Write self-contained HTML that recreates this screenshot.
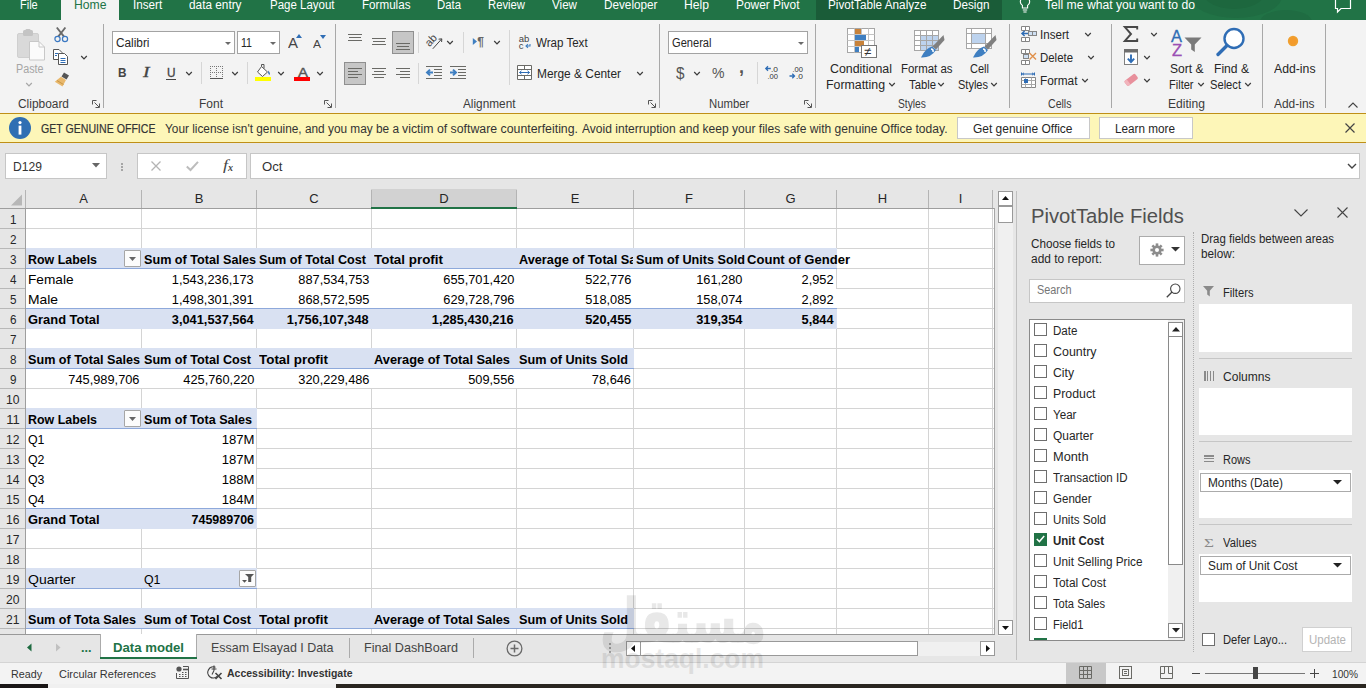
<!DOCTYPE html>
<html lang="en"><head><meta charset="utf-8"><title>Excel</title>
<style>

html,body{margin:0;padding:0;}
body{width:1366px;height:688px;overflow:hidden;background:#e6e6e6;font-family:"Liberation Sans",sans-serif;color:#262626;}
#root{position:relative;width:1366px;height:688px;overflow:hidden;background:#e6e6e6;}
.a{position:absolute;box-sizing:border-box;display:block;}
.t{position:absolute;white-space:nowrap;display:block;}
svg{overflow:visible;}

</style></head>
<body>
<div id="root">
<div class="a" style="left:0px;top:0px;width:1366px;height:20px;background:#217346;"></div>
<div class="a" style="left:816px;top:0px;width:186px;height:20px;background:#1a5c38;"></div>
<svg class="a" style="left:1186px;top:0px;overflow:hidden;" width="128" height="20" viewBox="0 0 128 20"><ellipse cx="50" cy="-4" rx="46" ry="22" fill="#1f6c42"/><ellipse cx="48" cy="-6" rx="30" ry="15" fill="#1d673e"/><ellipse cx="100" cy="22" rx="26" ry="12" fill="#1f6c42"/></svg>
<div class="a" style="left:61px;top:0px;width:58px;height:20px;background:#f3f3f3;"></div>
<span class="t" style="top:-2px;font-size:12px;line-height:14px;height:14px;left:20px;transform-origin:0 50%;color:#fff;transform:scaleX(0.9150);">File</span>
<span class="t" style="top:-2px;font-size:12px;line-height:14px;height:14px;left:132.8px;transform-origin:0 50%;color:#fff;transform:scaleX(0.9728);">Insert</span>
<span class="t" style="top:-2px;font-size:12px;line-height:14px;height:14px;left:189px;transform-origin:0 50%;color:#fff;transform:scaleX(0.9836);">data entry</span>
<span class="t" style="top:-2px;font-size:12px;line-height:14px;height:14px;left:269.5px;transform-origin:0 50%;color:#fff;transform:scaleX(0.9571);">Page Layout</span>
<span class="t" style="top:-2px;font-size:12px;line-height:14px;height:14px;left:361.5px;transform-origin:0 50%;color:#fff;transform:scaleX(0.9697);">Formulas</span>
<span class="t" style="top:-2px;font-size:12px;line-height:14px;height:14px;left:437px;transform-origin:0 50%;color:#fff;transform:scaleX(0.9464);">Data</span>
<span class="t" style="top:-2px;font-size:12px;line-height:14px;height:14px;left:488px;transform-origin:0 50%;color:#fff;transform:scaleX(0.9401);">Review</span>
<span class="t" style="top:-2px;font-size:12px;line-height:14px;height:14px;left:552px;transform-origin:0 50%;color:#fff;transform:scaleX(0.9691);">View</span>
<span class="t" style="top:-2px;font-size:12px;line-height:14px;height:14px;left:604px;transform-origin:0 50%;color:#fff;transform:scaleX(0.9780);">Developer</span>
<span class="t" style="top:-2px;font-size:12px;line-height:14px;height:14px;left:684px;transform-origin:0 50%;color:#fff;transform:scaleX(1.0127);">Help</span>
<span class="t" style="top:-2px;font-size:12px;line-height:14px;height:14px;left:736px;transform-origin:0 50%;color:#fff;transform:scaleX(0.9917);">Power Pivot</span>
<span class="t" style="top:-2px;font-size:12px;line-height:14px;height:14px;left:828px;transform-origin:0 50%;color:#fff;transform:scaleX(0.9778);">PivotTable Analyze</span>
<span class="t" style="top:-2px;font-size:12px;line-height:14px;height:14px;left:953px;transform-origin:0 50%;color:#fff;transform:scaleX(0.9770);">Design</span>
<span class="t" style="top:-2px;font-size:12px;line-height:14px;height:14px;left:1045px;transform-origin:0 50%;color:#fff;transform:scaleX(1.0130);">Tell me what you want to do</span>
<span class="t" style="top:-2px;font-size:12px;line-height:14px;height:14px;left:73.5px;transform-origin:0 50%;color:#217346;transform:scaleX(1.0151);">Home</span>
<svg class="a" style="left:1018px;top:0px;" width="14" height="14" viewBox="0 0 14 14"><path d="M7 -3 a4.6 4.6 0 0 1 2.6 8.4 V8 H4.4 V5.4 A4.6 4.6 0 0 1 7 -3 Z M4.8 10 H9.2 M5.4 12 H8.6" fill="none" stroke="#fff" stroke-width="1.1"/></svg>
<svg class="a" style="left:1334px;top:0px;" width="18" height="14" viewBox="0 0 18 14"><path d="M1.5 -3 H16.5 V8.5 H7 L3.5 12 V8.5 H1.5 Z" fill="none" stroke="#fff" stroke-width="1.2"/></svg>
<div class="a" style="left:0px;top:20px;width:1366px;height:93px;background:#f3f3f3;"></div>
<div class="a" style="left:61px;top:19px;width:58px;height:2px;background:#f3f3f3;"></div>
<div class="a" style="left:103px;top:24px;width:1px;height:84px;background:#a8a8a8;"></div>
<div class="a" style="left:335px;top:24px;width:1px;height:84px;background:#a8a8a8;"></div>
<div class="a" style="left:659px;top:24px;width:1px;height:84px;background:#a8a8a8;"></div>
<div class="a" style="left:815px;top:24px;width:1px;height:84px;background:#a8a8a8;"></div>
<div class="a" style="left:1009px;top:24px;width:1px;height:84px;background:#a8a8a8;"></div>
<div class="a" style="left:1111px;top:24px;width:1px;height:84px;background:#a8a8a8;"></div>
<div class="a" style="left:1262px;top:24px;width:1px;height:84px;background:#a8a8a8;"></div>
<div class="a" style="left:1325px;top:24px;width:1px;height:84px;background:#a8a8a8;"></div>
<div class="a" style="left:418px;top:32px;width:1px;height:21px;background:#d6d6d6;"></div>
<div class="a" style="left:463px;top:32px;width:1px;height:21px;background:#d6d6d6;"></div>
<div class="a" style="left:509px;top:30px;width:1px;height:55px;background:#d6d6d6;"></div>
<div class="a" style="left:418px;top:63px;width:1px;height:21px;background:#d6d6d6;"></div>
<div class="a" style="left:757px;top:62px;width:1px;height:22px;background:#d6d6d6;"></div>
<div class="a" style="left:201px;top:62px;width:1px;height:22px;background:#d6d6d6;"></div>
<div class="a" style="left:247px;top:62px;width:1px;height:22px;background:#d6d6d6;"></div>
<span class="t" style="top:97px;font-size:12px;line-height:14px;height:14px;left:18px;transform-origin:0 50%;color:#3b3b3b;transform:scaleX(0.9927);">Clipboard</span>
<span class="t" style="top:97px;font-size:12px;line-height:14px;height:14px;left:199px;transform-origin:0 50%;color:#3b3b3b;transform:scaleX(0.9993);">Font</span>
<span class="t" style="top:97px;font-size:12px;line-height:14px;height:14px;left:463px;transform-origin:0 50%;color:#3b3b3b;transform:scaleX(0.9836);">Alignment</span>
<span class="t" style="top:97px;font-size:12px;line-height:14px;height:14px;left:709.3px;transform-origin:0 50%;color:#3b3b3b;transform:scaleX(0.9441);">Number</span>
<span class="t" style="top:97px;font-size:12px;line-height:14px;height:14px;left:898.4px;transform-origin:0 50%;color:#3b3b3b;transform:scaleX(0.8535);">Styles</span>
<span class="t" style="top:97px;font-size:12px;line-height:14px;height:14px;left:1048px;transform-origin:0 50%;color:#3b3b3b;transform:scaleX(0.8811);">Cells</span>
<span class="t" style="top:97px;font-size:12px;line-height:14px;height:14px;left:1167.5px;transform-origin:0 50%;color:#3b3b3b;transform:scaleX(1.0081);">Editing</span>
<span class="t" style="top:97px;font-size:12px;line-height:14px;height:14px;left:1273.5px;transform-origin:0 50%;color:#3b3b3b;transform:scaleX(0.9954);">Add-ins</span>
<svg class="a" style="left:92px;top:100px;" width="8" height="8" viewBox="0 0 8 8"><path d="M0.5 4.5 V0.5 H4.5" fill="none" stroke="#555" stroke-width="1"/><path d="M2.5 2.5 L7 7 M7.5 3.5 V7.5 H3.5" fill="none" stroke="#555" stroke-width="1"/></svg>
<svg class="a" style="left:324px;top:100px;" width="8" height="8" viewBox="0 0 8 8"><path d="M0.5 4.5 V0.5 H4.5" fill="none" stroke="#555" stroke-width="1"/><path d="M2.5 2.5 L7 7 M7.5 3.5 V7.5 H3.5" fill="none" stroke="#555" stroke-width="1"/></svg>
<svg class="a" style="left:648px;top:100px;" width="8" height="8" viewBox="0 0 8 8"><path d="M0.5 4.5 V0.5 H4.5" fill="none" stroke="#555" stroke-width="1"/><path d="M2.5 2.5 L7 7 M7.5 3.5 V7.5 H3.5" fill="none" stroke="#555" stroke-width="1"/></svg>
<svg class="a" style="left:804px;top:100px;" width="8" height="8" viewBox="0 0 8 8"><path d="M0.5 4.5 V0.5 H4.5" fill="none" stroke="#555" stroke-width="1"/><path d="M2.5 2.5 L7 7 M7.5 3.5 V7.5 H3.5" fill="none" stroke="#555" stroke-width="1"/></svg>
<svg class="a" style="left:1348px;top:102px;" width="10" height="6" viewBox="0 0 10 6"><path d="M0.5 5.5 L5 1 L9.5 5.5" fill="none" stroke="#444" stroke-width="1.1"/></svg>
<span class="t" style="top:62px;font-size:12px;line-height:14px;height:14px;left:15.5px;transform-origin:0 50%;color:#a6a6a6;transform:scaleX(0.8961);">Paste</span>
<svg class="a" style="left:24.5px;top:81.5px;" width="8" height="6" viewBox="0 0 8 6"><path d="M1.2 1 L4 3.8 L6.8 1" fill="none" stroke="#a6a6a6" stroke-width="1.2"/></svg>
<svg class="a" style="left:17px;top:28.5px;" width="29" height="32" viewBox="0 0 29 32"><rect x="0.5" y="4.5" width="21" height="24" rx="1.5" fill="#d9d9d9" stroke="#cfcfcf"/><rect x="6" y="1" width="10" height="6" rx="1.5" fill="#c4c4c4"/><rect x="8.5" y="0" width="5" height="3" rx="1" fill="#c4c4c4"/><path d="M12.5 12.5 H22 L27.5 18 V31 H12.5 Z" fill="#fbfbfb" stroke="#c8c8c8"/><path d="M22 12.5 V18 H27.5" fill="none" stroke="#c8c8c8"/></svg>
<svg class="a" style="left:54px;top:25.6px;" width="15" height="17" viewBox="0 0 15 17"><path d="M2.8 1.5 L10 10.6 M11.4 1.5 L4.2 10.6" stroke="#6a6a6a" stroke-width="1.9" fill="none"/><circle cx="3.5" cy="13" r="2.6" fill="#f3f3f3" stroke="#3a78c2" stroke-width="1.2"/><circle cx="11" cy="13" r="2.6" fill="#f3f3f3" stroke="#3a78c2" stroke-width="1.2"/></svg>
<svg class="a" style="left:53px;top:49px;" width="16" height="16" viewBox="0 0 16 16"><path d="M0.5 0.5 H6 L9 3.5 V10.5 H0.5 Z" fill="#fff" stroke="#555"/><path d="M5.5 4.5 H11.5 L14.5 7.5 V15.5 H5.5 Z" fill="#fff" stroke="#555"/><path d="M2 4.5h3M2 6.5h2M7.5 9.5h5M7.5 11.5h5M7.5 13.5h5" stroke="#2f6db5" stroke-width="1"/></svg>
<svg class="a" style="left:79.5px;top:54.5px;" width="8" height="6" viewBox="0 0 8 6"><path d="M1.2 1 L4 3.8 L6.8 1" fill="none" stroke="#3a3a3a" stroke-width="1.2"/></svg>
<svg class="a" style="left:54px;top:72px;" width="16" height="15" viewBox="0 0 16 15"><path d="M10 0.5 L15 3.5 L12.5 7.5 L7.5 4.5 Z" fill="#555"/><path d="M7 4.8 L12 8 L8.5 14.5 L0.8 9.8 Z" fill="#e9b86c"/><path d="M3 8.5 L9.5 12.5" stroke="#c79646" stroke-width="1"/></svg>
<div class="a" style="left:112px;top:31px;width:123px;height:23px;background:#fff;border:1px solid #a3a3a3;"></div>
<span class="t" style="top:36px;font-size:12px;line-height:14px;height:14px;left:115.5px;transform-origin:0 50%;color:#262626;transform:scaleX(0.9848);">Calibri</span>
<svg class="a" style="left:224.5px;top:41.5px;" width="6" height="3" viewBox="0 0 6 3"><path d="M0 0 H6 L3 3 Z" fill="#6a6a6a"/></svg>
<div class="a" style="left:237px;top:31px;width:43px;height:23px;background:#fff;border:1px solid #a3a3a3;"></div>
<span class="t" style="top:36px;font-size:12px;line-height:14px;height:14px;left:240.5px;transform-origin:0 50%;color:#262626;transform:scaleX(0.8822);">11</span>
<svg class="a" style="left:269.5px;top:41.5px;" width="6" height="3" viewBox="0 0 6 3"><path d="M0 0 H6 L3 3 Z" fill="#6a6a6a"/></svg>
<span class="t" style="top:35px;font-size:14px;line-height:16px;height:16px;left:288px;transform-origin:0 50%;color:#444;transform:scaleX(1.0702);">A</span>
<svg class="a" style="left:296px;top:34px;" width="6" height="4" viewBox="0 0 6 4"><path d="M0 4 L3 0 L6 4 Z" fill="#2f6db5"/></svg>
<span class="t" style="top:38px;font-size:11.5px;line-height:12px;height:12px;left:313px;transform-origin:0 50%;color:#444;transform:scaleX(1.0428);">A</span>
<svg class="a" style="left:320px;top:35px;" width="6" height="4" viewBox="0 0 6 4"><path d="M0 0 H6 L3 4 Z" fill="#2f6db5"/></svg>
<span class="t" style="top:65px;font-size:13.5px;line-height:15px;height:15px;left:118px;transform-origin:0 50%;color:#444;font-weight:bold;transform:scaleX(0.8718);">B</span>
<span class="t" style="top:65px;font-size:14px;line-height:16px;height:16px;left:143px;transform-origin:0 50%;color:#444;font-style:italic;font-family:'Liberation Serif',serif;-webkit-text-stroke:0.3px #444;transform:scaleX(1.3913);">I</span>
<span class="t" style="top:66px;font-size:12px;line-height:14px;height:14px;left:166.5px;transform-origin:0 50%;color:#444;-webkit-text-stroke:0.3px #444;transform:scaleX(0.9802);">U</span>
<div class="a" style="left:166px;top:79px;width:10px;height:1px;background:#444;"></div>
<svg class="a" style="left:184.5px;top:70.5px;" width="8" height="6" viewBox="0 0 8 6"><path d="M1.2 1 L4 3.8 L6.8 1" fill="none" stroke="#3a3a3a" stroke-width="1.2"/></svg>
<svg class="a" style="left:210px;top:66px;shape-rendering:crispEdges;" width="13" height="13" viewBox="0 0 13 13"><rect x="0" y="0" width="1" height="1" fill="#777"/><rect x="2" y="0" width="1" height="1" fill="#777"/><rect x="4" y="0" width="1" height="1" fill="#777"/><rect x="6" y="0" width="1" height="1" fill="#777"/><rect x="8" y="0" width="1" height="1" fill="#777"/><rect x="10" y="0" width="1" height="1" fill="#777"/><rect x="12" y="0" width="1" height="1" fill="#777"/><rect x="0" y="6" width="1" height="1" fill="#777"/><rect x="2" y="6" width="1" height="1" fill="#777"/><rect x="4" y="6" width="1" height="1" fill="#777"/><rect x="6" y="6" width="1" height="1" fill="#777"/><rect x="8" y="6" width="1" height="1" fill="#777"/><rect x="10" y="6" width="1" height="1" fill="#777"/><rect x="12" y="6" width="1" height="1" fill="#777"/><rect x="0" y="2" width="1" height="1" fill="#777"/><rect x="0" y="4" width="1" height="1" fill="#777"/><rect x="0" y="6" width="1" height="1" fill="#777"/><rect x="0" y="8" width="1" height="1" fill="#777"/><rect x="0" y="10" width="1" height="1" fill="#777"/><rect x="6" y="2" width="1" height="1" fill="#777"/><rect x="6" y="4" width="1" height="1" fill="#777"/><rect x="6" y="6" width="1" height="1" fill="#777"/><rect x="6" y="8" width="1" height="1" fill="#777"/><rect x="6" y="10" width="1" height="1" fill="#777"/><rect x="12" y="2" width="1" height="1" fill="#777"/><rect x="12" y="4" width="1" height="1" fill="#777"/><rect x="12" y="6" width="1" height="1" fill="#777"/><rect x="12" y="8" width="1" height="1" fill="#777"/><rect x="12" y="10" width="1" height="1" fill="#777"/><rect x="0" y="12" width="13" height="1" fill="#555"/></svg>
<svg class="a" style="left:230.5px;top:70.5px;" width="8" height="6" viewBox="0 0 8 6"><path d="M1.2 1 L4 3.8 L6.8 1" fill="none" stroke="#3a3a3a" stroke-width="1.2"/></svg>
<svg class="a" style="left:256px;top:64px;" width="16" height="17" viewBox="0 0 16 17"><path d="M5.5 2.5 L11.5 8 L6.5 12.5 L1.5 8 Z" fill="#fff" stroke="#555" stroke-width="1"/><path d="M5.5 2.5 V0.5 H8 V4.5" fill="none" stroke="#555"/><path d="M12.2 6.5 Q15 9.5 13.2 11 Q11.5 10 12.2 6.5Z" fill="#2f6db5"/><rect x="-1" y="13" width="16" height="4" fill="#ffff00"/></svg>
<svg class="a" style="left:276.5px;top:70.5px;" width="8" height="6" viewBox="0 0 8 6"><path d="M1.2 1 L4 3.8 L6.8 1" fill="none" stroke="#3a3a3a" stroke-width="1.2"/></svg>
<span class="t" style="top:65px;font-size:13.5px;line-height:15px;height:15px;left:297.5px;transform-origin:0 50%;color:#555;-webkit-text-stroke:0.4px #555;transform:scaleX(1.1092);">A</span>
<div class="a" style="left:294px;top:77px;width:16px;height:4px;background:#ff0000;"></div>
<svg class="a" style="left:315.5px;top:70.5px;" width="8" height="6" viewBox="0 0 8 6"><path d="M1.2 1 L4 3.8 L6.8 1" fill="none" stroke="#3a3a3a" stroke-width="1.2"/></svg>
<div class="a" style="left:392px;top:31px;width:22px;height:23px;background:#c6c6c6;border:1px solid #8f8f8f;"></div>
<div class="a" style="left:344px;top:62px;width:22px;height:23px;background:#c6c6c6;border:1px solid #8f8f8f;"></div>
<div class="a" style="left:348.0px;top:34px;width:14px;height:1px;background:#6a6a66;"></div>
<div class="a" style="left:349.0px;top:37px;width:12px;height:1px;background:#6a6a66;"></div>
<div class="a" style="left:348.0px;top:40px;width:14px;height:1px;background:#6a6a66;"></div>
<div class="a" style="left:372.0px;top:38px;width:14px;height:1px;background:#6a6a66;"></div>
<div class="a" style="left:373.0px;top:41px;width:12px;height:1px;background:#6a6a66;"></div>
<div class="a" style="left:372.0px;top:44px;width:14px;height:1px;background:#6a6a66;"></div>
<div class="a" style="left:396.0px;top:43px;width:14px;height:1px;background:#6a6a66;"></div>
<div class="a" style="left:397.0px;top:46px;width:12px;height:1px;background:#6a6a66;"></div>
<div class="a" style="left:396.0px;top:49px;width:14px;height:1px;background:#6a6a66;"></div>
<div class="a" style="left:348px;top:68px;width:14px;height:1px;background:#6a6a66;"></div>
<div class="a" style="left:348px;top:71px;width:10px;height:1px;background:#6a6a66;"></div>
<div class="a" style="left:348px;top:74px;width:14px;height:1px;background:#6a6a66;"></div>
<div class="a" style="left:348px;top:77px;width:10px;height:1px;background:#6a6a66;"></div>
<div class="a" style="left:372.0px;top:68px;width:14px;height:1px;background:#6a6a66;"></div>
<div class="a" style="left:374.0px;top:71px;width:10px;height:1px;background:#6a6a66;"></div>
<div class="a" style="left:372.0px;top:74px;width:14px;height:1px;background:#6a6a66;"></div>
<div class="a" style="left:374.0px;top:77px;width:10px;height:1px;background:#6a6a66;"></div>
<div class="a" style="left:396px;top:68px;width:14px;height:1px;background:#6a6a66;"></div>
<div class="a" style="left:400px;top:71px;width:10px;height:1px;background:#6a6a66;"></div>
<div class="a" style="left:396px;top:74px;width:14px;height:1px;background:#6a6a66;"></div>
<div class="a" style="left:400px;top:77px;width:10px;height:1px;background:#6a6a66;"></div>
<svg class="a" style="left:426px;top:34px;" width="18" height="18" viewBox="0 0 18 18"><text x="-1" y="9.5" font-size="11" fill="#444" transform="rotate(-47 5.4 6.3)" font-family="Liberation Sans, sans-serif">ab</text><path d="M6.8 14.8 L15.6 5 M12.6 5.2 L15.8 4.8 L15.6 8" fill="none" stroke="#444" stroke-width="1"/></svg>
<svg class="a" style="left:445.5px;top:39.5px;" width="8" height="6" viewBox="0 0 8 6"><path d="M1.2 1 L4 3.8 L6.8 1" fill="none" stroke="#3a3a3a" stroke-width="1.2"/></svg>
<svg class="a" style="left:472px;top:37px;" width="14" height="12" viewBox="0 0 14 12"><path d="M0.8 1 L5 4.5 L0.8 8 Z" fill="#3f7fc1"/><text x="5.2" y="9" font-size="12" font-weight="bold" fill="#666" font-family="Liberation Sans, sans-serif">¶</text></svg>
<svg class="a" style="left:492.5px;top:39.5px;" width="8" height="6" viewBox="0 0 8 6"><path d="M1.2 1 L4 3.8 L6.8 1" fill="none" stroke="#3a3a3a" stroke-width="1.2"/></svg>
<svg class="a" style="left:426px;top:66px;" width="16" height="13" viewBox="0 0 16 13"><path d="M0 0.5h16M8 3.5h8M8 6.5h8M8 9.5h8M0 12.5h16" stroke="#6a6a66" stroke-width="1"/><path d="M7 6.5 H2 M4 3.6 L1 6.5 L4 9.4" stroke="#3f7fc1" stroke-width="2" fill="none"/></svg>
<svg class="a" style="left:450px;top:66px;" width="16" height="13" viewBox="0 0 16 13"><path d="M0 0.5h16M8 3.5h8M8 6.5h8M8 9.5h8M0 12.5h16" stroke="#6a6a66" stroke-width="1"/><path d="M0 6.5 H5 M3 3.6 L6 6.5 L3 9.4" stroke="#3f7fc1" stroke-width="2" fill="none"/></svg>
<svg class="a" style="left:518px;top:34px;" width="14" height="16" viewBox="0 0 14 16"><text x="0.8" y="7.8" font-size="9.5" fill="#444" font-family="Liberation Sans, sans-serif">ab</text><text x="0.8" y="14.8" font-size="9.5" fill="#444" font-family="Liberation Sans, sans-serif">c</text><path d="M8 12 H12 V10 M10 10.2 L8 12 L10 13.8" stroke="#3f7fc1" stroke-width="1.1" fill="none"/></svg>
<span class="t" style="top:36px;font-size:12px;line-height:14px;height:14px;left:536px;transform-origin:0 50%;color:#262626;transform:scaleX(0.9631);">Wrap Text</span>
<svg class="a" style="left:517px;top:65px;" width="15" height="15" viewBox="0 0 15 15"><path d="M0.5 0.5 H14.5 V14.5 H0.5 Z M0.5 4.5 H14.5 M0.5 10.5 H14.5 M7.5 0.5 V4.5 M7.5 10.5 V14.5" fill="#fff" stroke="#6a6a66"/><path d="M2.5 7.5 H12.5 M4.5 5.8 L2.5 7.5 L4.5 9.2 M10.5 5.8 L12.5 7.5 L10.5 9.2" stroke="#2f6db5" stroke-width="1" fill="none"/></svg>
<span class="t" style="top:67px;font-size:12px;line-height:14px;height:14px;left:536.5px;transform-origin:0 50%;color:#262626;transform:scaleX(0.9917);">Merge &amp; Center</span>
<svg class="a" style="left:635.5px;top:70.5px;" width="8" height="6" viewBox="0 0 8 6"><path d="M1.2 1 L4 3.8 L6.8 1" fill="none" stroke="#3a3a3a" stroke-width="1.2"/></svg>
<div class="a" style="left:668px;top:31px;width:140px;height:23px;background:#fff;border:1px solid #a3a3a3;"></div>
<span class="t" style="top:36px;font-size:12px;line-height:14px;height:14px;left:671.5px;transform-origin:0 50%;color:#262626;transform:scaleX(0.9250);">General</span>
<svg class="a" style="left:797.5px;top:41.5px;" width="6" height="3" viewBox="0 0 6 3"><path d="M0 0 H6 L3 3 Z" fill="#6a6a6a"/></svg>
<span class="t" style="top:64px;font-size:16.5px;line-height:18px;height:18px;left:675.5px;transform-origin:0 50%;color:#555;transform:scaleX(0.9252);">$</span>
<svg class="a" style="left:692.5px;top:70.5px;" width="8" height="6" viewBox="0 0 8 6"><path d="M1.2 1 L4 3.8 L6.8 1" fill="none" stroke="#3a3a3a" stroke-width="1.2"/></svg>
<span class="t" style="top:65px;font-size:14px;line-height:16px;height:16px;left:712px;transform-origin:0 50%;color:#555;transform:scaleX(1.0038);">%</span>
<span class="t" style="top:56px;font-size:19px;line-height:21px;height:21px;left:738.5px;transform-origin:0 50%;color:#555;font-weight:bold;transform:scaleX(0.9467);">,</span>
<svg class="a" style="left:765px;top:65px;" width="16" height="15" viewBox="0 0 16 15"><path d="M5.8 3.5 H0.8 M3 1.3 L0.8 3.5 L3 5.7" stroke="#2f6db5" stroke-width="1.3" fill="none"/><text x="6" y="6.5" font-size="8" fill="#333" font-family="Liberation Sans, sans-serif" textLength="7" lengthAdjust="spacingAndGlyphs">.0</text><text x="2.5" y="14" font-size="8" fill="#333" font-family="Liberation Sans, sans-serif" textLength="10.5" lengthAdjust="spacingAndGlyphs">.00</text></svg>
<svg class="a" style="left:789px;top:65px;" width="16" height="15" viewBox="0 0 16 15"><text x="3.5" y="6.5" font-size="8" fill="#333" font-family="Liberation Sans, sans-serif" textLength="10.5" lengthAdjust="spacingAndGlyphs">.00</text><path d="M0.5 11 H5.5 M3.3 8.8 L5.5 11 L3.3 13.2" stroke="#2f6db5" stroke-width="1.3" fill="none"/><text x="7" y="14" font-size="8" fill="#333" font-family="Liberation Sans, sans-serif" textLength="7" lengthAdjust="spacingAndGlyphs">.0</text></svg>
<svg class="a" style="left:847px;top:28px;" width="31" height="31" viewBox="0 0 31 31"><rect x="0.5" y="0.5" width="27" height="24" fill="#fff" stroke="#a6a6a6"/><path d="M0.5 6.5h27M0.5 12.5h27M0.5 18.5h27M7.5 0.5v24M14.5 0.5v24M21.5 0.5v24" stroke="#c4c4c4"/><rect x="8" y="1" width="6" height="5" fill="#c8823a"/><rect x="8" y="7" width="11" height="5" fill="#3f7fc1"/><rect x="8" y="13" width="9" height="5" fill="#c8823a"/><rect x="8" y="19" width="4" height="5" fill="#3f7fc1"/><rect x="14.5" y="17.5" width="15" height="12" fill="#fff" stroke="#777"/><text x="17" y="28" font-size="13" fill="#333" font-family="Liberation Sans, sans-serif">≠</text></svg>
<span class="t" style="top:62px;font-size:12px;line-height:14px;height:14px;left:830px;transform-origin:0 50%;color:#262626;transform:scaleX(1.0325);">Conditional</span>
<span class="t" style="top:78px;font-size:12px;line-height:14px;height:14px;left:826px;transform-origin:0 50%;color:#262626;transform:scaleX(1.0286);">Formatting</span>
<svg class="a" style="left:887.5px;top:82px;" width="8" height="6" viewBox="0 0 8 6"><path d="M1.2 1 L4 3.8 L6.8 1" fill="none" stroke="#3a3a3a" stroke-width="1.2"/></svg>
<svg class="a" style="left:914px;top:30px;" width="31" height="29" viewBox="0 0 31 29"><rect x="0.5" y="0.5" width="24" height="20" fill="#fff" stroke="#a6a6a6"/><rect x="6" y="5" width="18" height="15" fill="#bdd3ee"/><path d="M0.5 5.5h24M0.5 10.5h24M0.5 15.5h24M6.5 0.5v20M12.5 0.5v20M18.5 0.5v20" stroke="#a6a6a6"/><path d="M29.5 5 L30.5 10 L22 19.5 L18.5 16.5 Z" fill="#808080"/><path d="M18 16.5 Q11 18.5 7 27.5 Q17 28 22 20 Z" fill="#3f7fc1"/><path d="M17 19 Q19.5 19 19 22" stroke="#fff" stroke-width="1.6" fill="none"/></svg>
<span class="t" style="top:62px;font-size:12px;line-height:14px;height:14px;left:901px;transform-origin:0 50%;color:#262626;transform:scaleX(0.9534);">Format as</span>
<span class="t" style="top:78px;font-size:12px;line-height:14px;height:14px;left:909px;transform-origin:0 50%;color:#262626;transform:scaleX(0.9412);">Table</span>
<svg class="a" style="left:937px;top:82px;" width="8" height="6" viewBox="0 0 8 6"><path d="M1.2 1 L4 3.8 L6.8 1" fill="none" stroke="#3a3a3a" stroke-width="1.2"/></svg>
<svg class="a" style="left:966px;top:30px;" width="31" height="29" viewBox="0 0 31 29"><rect x="0.5" y="-1.5" width="25" height="20" fill="#fff" stroke="#a6a6a6"/><path d="M0.5 3.5h25M0.5 13.5h25M5.5 -1.5v20M19.5 -1.5v20" stroke="#a6a6a6"/><rect x="6" y="4" width="13" height="9" fill="#bdd3ee"/><path d="M29.5 5 L30.5 10 L22 19.5 L18.5 16.5 Z" fill="#808080"/><path d="M18 16.5 Q11 18.5 7 27.5 Q17 28 22 20 Z" fill="#3f7fc1"/><path d="M17 19 Q19.5 19 19 22" stroke="#fff" stroke-width="1.6" fill="none"/></svg>
<span class="t" style="top:62px;font-size:12px;line-height:14px;height:14px;left:969.5px;transform-origin:0 50%;color:#262626;transform:scaleX(0.9191);">Cell</span>
<span class="t" style="top:78px;font-size:12px;line-height:14px;height:14px;left:958px;transform-origin:0 50%;color:#262626;transform:scaleX(0.9178);">Styles</span>
<svg class="a" style="left:990px;top:82px;" width="8" height="6" viewBox="0 0 8 6"><path d="M1.2 1 L4 3.8 L6.8 1" fill="none" stroke="#3a3a3a" stroke-width="1.2"/></svg>
<svg class="a" style="left:1021px;top:26px;" width="16" height="16" viewBox="0 0 16 16"><path d="M0.5 0.5h8v4h-8zM0.5 11.5h8v4h-8zM4.5 0.5v4M4.5 11.5v4" fill="#fff" stroke="#858585"/><rect x="7.5" y="5.5" width="8" height="4" fill="#cfe0f3" stroke="#858585"/><path d="M11.5 5.5v4" stroke="#858585"/><path d="M7 7.5 H1.2 M3.6 5 L1 7.5 L3.6 10" stroke="#2f6db5" stroke-width="1.5" fill="none"/></svg>
<span class="t" style="top:28px;font-size:12px;line-height:14px;height:14px;left:1040px;transform-origin:0 50%;color:#262626;transform:scaleX(0.9662);">Insert</span>
<svg class="a" style="left:1083.5px;top:31.5px;" width="8" height="6" viewBox="0 0 8 6"><path d="M1.2 1 L4 3.8 L6.8 1" fill="none" stroke="#3a3a3a" stroke-width="1.2"/></svg>
<svg class="a" style="left:1021px;top:49px;" width="16" height="16" viewBox="0 0 16 16"><path d="M0.5 0.5h8v4h-8zM0.5 11.5h8v4h-8zM4.5 0.5v4M4.5 11.5v4" fill="#fff" stroke="#858585"/><rect x="2.5" y="5.5" width="5" height="4" fill="#cfe0f3" stroke="#858585"/><path d="M8.5 4 L15 10.5 M15 4 L8.5 10.5" stroke="#e0904a" stroke-width="1.4" fill="none"/></svg>
<span class="t" style="top:51px;font-size:12px;line-height:14px;height:14px;left:1040px;transform-origin:0 50%;color:#262626;transform:scaleX(0.9514);">Delete</span>
<svg class="a" style="left:1087px;top:54.5px;" width="8" height="6" viewBox="0 0 8 6"><path d="M1.2 1 L4 3.8 L6.8 1" fill="none" stroke="#3a3a3a" stroke-width="1.2"/></svg>
<svg class="a" style="left:1021px;top:72px;" width="16" height="16" viewBox="0 0 16 16"><path d="M0.5 5.5h14v10h-14z" fill="#fff" stroke="#858585"/><path d="M0.5 8.5h14M0.5 12.5h14M4.5 5.5v10M10.5 5.5v10" stroke="#a8a8a8"/><rect x="3" y="7" width="4" height="4" fill="#2f6db5"/><path d="M0.5 0.5v3M13.5 0.5v3M1 2h12 M3 0.8 L1.5 2 L3 3.2 M11 0.8 L12.5 2 L11 3.2" stroke="#2f6db5" stroke-width="1" fill="none"/></svg>
<span class="t" style="top:74px;font-size:12px;line-height:14px;height:14px;left:1040px;transform-origin:0 50%;color:#262626;transform:scaleX(0.9864);">Format</span>
<svg class="a" style="left:1080.5px;top:77.5px;" width="8" height="6" viewBox="0 0 8 6"><path d="M1.2 1 L4 3.8 L6.8 1" fill="none" stroke="#3a3a3a" stroke-width="1.2"/></svg>
<svg class="a" style="left:1123px;top:26px;" width="16" height="16" viewBox="0 0 16 16"><path d="M14.2 3.6 V1 H1.8 L8 8 L1.8 15 H14.2 V12.4" fill="none" stroke="#484848" stroke-width="1.9"/></svg>
<svg class="a" style="left:1149.5px;top:31.5px;" width="8" height="6" viewBox="0 0 8 6"><path d="M1.2 1 L4 3.8 L6.8 1" fill="none" stroke="#3a3a3a" stroke-width="1.2"/></svg>
<svg class="a" style="left:1124px;top:49px;" width="15" height="16" viewBox="0 0 15 16"><rect x="0.5" y="0.5" width="13" height="15" fill="#fff" stroke="#808080"/><rect x="0" y="0" width="14" height="3.5" fill="#6e6e6e"/><path d="M7 5.5 V13 M3.8 9.6 L7 13 L10.2 9.6" stroke="#2f6db5" stroke-width="1.9" fill="none"/></svg>
<svg class="a" style="left:1142.5px;top:54.5px;" width="8" height="6" viewBox="0 0 8 6"><path d="M1.2 1 L4 3.8 L6.8 1" fill="none" stroke="#3a3a3a" stroke-width="1.2"/></svg>
<svg class="a" style="left:1124px;top:73px;" width="15" height="14" viewBox="0 0 15 14"><g transform="rotate(-38 7 7)"><rect x="0.5" y="3.8" width="13.5" height="6.4" rx="1.6" fill="#e8909c"/><rect x="0.5" y="3.8" width="3.5" height="6.4" rx="1.2" fill="#f1b4bc"/></g></svg>
<svg class="a" style="left:1142.5px;top:77.5px;" width="8" height="6" viewBox="0 0 8 6"><path d="M1.2 1 L4 3.8 L6.8 1" fill="none" stroke="#3a3a3a" stroke-width="1.2"/></svg>
<svg class="a" style="left:1171px;top:29px;" width="32" height="27" viewBox="0 0 32 27"><text x="0" y="12.5" font-size="16.5" fill="#2f6db5" stroke="#2f6db5" stroke-width="0.3" font-family="Liberation Sans, sans-serif">A</text><text x="1" y="27" font-size="16.5" fill="#9b4fb4" stroke="#9b4fb4" stroke-width="0.3" font-family="Liberation Sans, sans-serif">Z</text><path d="M13.5 8.5 H30.5 L23.8 15.5 V23 L20.2 20.5 V15.5 Z" fill="#7a7a7a"/></svg>
<span class="t" style="top:62px;font-size:12px;line-height:14px;height:14px;left:1170px;transform-origin:0 50%;color:#262626;transform:scaleX(1.0042);">Sort &amp;</span>
<span class="t" style="top:78px;font-size:12px;line-height:14px;height:14px;left:1169px;transform-origin:0 50%;color:#262626;transform:scaleX(0.9186);">Filter</span>
<svg class="a" style="left:1196.5px;top:82px;" width="8" height="6" viewBox="0 0 8 6"><path d="M1.2 1 L4 3.8 L6.8 1" fill="none" stroke="#3a3a3a" stroke-width="1.2"/></svg>
<svg class="a" style="left:1216px;top:28px;" width="29" height="28" viewBox="0 0 29 28"><circle cx="18" cy="10.5" r="9.5" fill="#fff" stroke="#2f6db5" stroke-width="2.4"/><path d="M11 17.5 L2 26.5" stroke="#2f6db5" stroke-width="3.4" stroke-linecap="round"/></svg>
<span class="t" style="top:62px;font-size:12px;line-height:14px;height:14px;left:1213.5px;transform-origin:0 50%;color:#262626;transform:scaleX(1.0090);">Find &amp;</span>
<span class="t" style="top:78px;font-size:12px;line-height:14px;height:14px;left:1210px;transform-origin:0 50%;color:#262626;transform:scaleX(0.9293);">Select</span>
<svg class="a" style="left:1243.5px;top:82px;" width="8" height="6" viewBox="0 0 8 6"><path d="M1.2 1 L4 3.8 L6.8 1" fill="none" stroke="#3a3a3a" stroke-width="1.2"/></svg>
<svg class="a" style="left:1286px;top:34px;" width="14" height="14" viewBox="0 0 14 14"><circle cx="7" cy="7" r="5.2" fill="#f0a030"/><circle cx="7" cy="7" r="3.4" fill="#f39a2b"/></svg>
<span class="t" style="top:62px;font-size:12px;line-height:14px;height:14px;left:1273.5px;transform-origin:0 50%;color:#262626;transform:scaleX(1.0200);">Add-ins</span>
<div class="a" style="left:0px;top:113px;width:1366px;height:30px;background:#fdf6b8;border-top:1px solid #bf8f17;border-bottom:1px solid #bf8f17;"></div>
<svg class="a" style="left:9px;top:117px;" width="22" height="22" viewBox="0 0 22 22"><circle cx="11" cy="11" r="11" fill="#2f6fb3"/><circle cx="11" cy="5.6" r="1.6" fill="#fff"/><rect x="9.6" y="8.6" width="2.8" height="9" fill="#fff"/></svg>
<span class="t" style="top:122px;font-size:12px;line-height:14px;height:14px;left:40.5px;transform-origin:0 50%;color:#333;-webkit-text-stroke:0.2px #333;transform:scaleX(0.8821);">GET GENUINE OFFICE</span>
<span class="t" style="top:122px;font-size:12px;line-height:14px;height:14px;left:164.5px;transform-origin:0 50%;color:#333;transform:scaleX(0.9859);">Your license isn&#x27;t genuine, and you may be a</span>
<span class="t" style="top:122px;font-size:12px;line-height:14px;height:14px;left:402px;transform-origin:0 50%;color:#333;transform:scaleX(1.0268);">victim of software counterfeiting.</span>
<span class="t" style="top:122px;font-size:12px;line-height:14px;height:14px;left:581.5px;transform-origin:0 50%;color:#333;transform:scaleX(1.0053);">Avoid interruption and keep your files safe with genuine Office today.</span>
<div class="a" style="left:957px;top:117px;width:133px;height:22px;background:#fff;border:1px solid #c8c8c8;"></div>
<span class="t" style="top:122px;font-size:12px;line-height:14px;height:14px;left:973px;transform-origin:0 50%;color:#262626;transform:scaleX(0.9966);">Get genuine Office</span>
<div class="a" style="left:1099px;top:117px;width:94px;height:22px;background:#fff;border:1px solid #c8c8c8;"></div>
<span class="t" style="top:122px;font-size:12px;line-height:14px;height:14px;left:1115px;transform-origin:0 50%;color:#262626;transform:scaleX(0.9776);">Learn more</span>
<svg class="a" style="left:1345px;top:123px;" width="10" height="10" viewBox="0 0 10 10"><path d="M0.5 0.5 L9.5 9.5 M9.5 0.5 L0.5 9.5" stroke="#444" stroke-width="1.2"/></svg>
<div class="a" style="left:0px;top:143px;width:1366px;height:46px;background:#e6e6e6;"></div>
<div class="a" style="left:5px;top:153px;width:102px;height:26px;background:#fff;border:1px solid #c6c6c6;"></div>
<span class="t" style="top:160px;font-size:12.5px;line-height:14px;height:14px;left:12.5px;transform-origin:0 50%;color:#333;transform:scaleX(0.9702);">D129</span>
<svg class="a" style="left:92px;top:163px;" width="9" height="5" viewBox="0 0 9 5"><path d="M0 0 H8 L4 4.5 Z" fill="#666"/></svg>
<div class="a" style="left:121px;top:163px;width:2px;height:2px;background:#a6a6a6;"></div>
<div class="a" style="left:121px;top:166px;width:2px;height:2px;background:#a6a6a6;"></div>
<div class="a" style="left:121px;top:169px;width:2px;height:2px;background:#a6a6a6;"></div>
<div class="a" style="left:137px;top:153px;width:110px;height:26px;background:#fff;border:1px solid #c6c6c6;"></div>
<svg class="a" style="left:151px;top:161px;" width="10" height="10" viewBox="0 0 10 10"><path d="M0.5 0.5 L9.5 9.5 M9.5 0.5 L0.5 9.5" stroke="#b4b4b4" stroke-width="1.3"/></svg>
<svg class="a" style="left:186px;top:161px;" width="13" height="10" viewBox="0 0 13 10"><path d="M0.8 5.5 L4.5 9 L12 0.8" stroke="#bcbcbc" stroke-width="2" fill="none"/></svg>
<span class="t" style="top:158px;font-size:14px;line-height:16px;height:16px;left:223px;transform-origin:0 50%;color:#444;font-style:italic;font-family:'Liberation Serif',serif;transform:scaleX(1.2851);">f</span>
<span class="t" style="top:163px;font-size:9.5px;line-height:11px;height:11px;left:227.5px;transform-origin:0 50%;color:#444;font-weight:bold;font-style:italic;font-family:'Liberation Serif',serif;transform:scaleX(1.0526);">x</span>
<div class="a" style="left:250px;top:153px;width:1110px;height:26px;background:#fff;border:1px solid #c6c6c6;"></div>
<span class="t" style="top:159px;font-size:13px;line-height:15px;height:15px;left:262px;transform-origin:0 50%;color:#333;transform:scaleX(1.0131);">Oct</span>
<svg class="a" style="left:1347px;top:163px;" width="10" height="6" viewBox="0 0 10 6"><path d="M1 1 L5 5 L9 1" fill="none" stroke="#444" stroke-width="1.4"/></svg>
<div class="a" style="left:0px;top:189px;width:994px;height:445px;background:#fff;"></div>
<div class="a" style="left:0px;top:189px;width:994px;height:20px;background:#e6e6e6;"></div>
<div class="a" style="left:371px;top:189px;width:146px;height:18px;background:#d2d2d2;"></div>
<div class="a" style="left:0px;top:209px;width:25px;height:425px;background:#e6e6e6;"></div>
<div class="a" style="left:25px;top:228px;width:969px;height:1px;background:#d4d4d4;"></div>
<div class="a" style="left:0px;top:228px;width:25px;height:1px;background:#b8b8b8;"></div>
<div class="a" style="left:25px;top:248px;width:969px;height:1px;background:#d4d4d4;"></div>
<div class="a" style="left:0px;top:248px;width:25px;height:1px;background:#b8b8b8;"></div>
<div class="a" style="left:25px;top:268px;width:969px;height:1px;background:#d4d4d4;"></div>
<div class="a" style="left:0px;top:268px;width:25px;height:1px;background:#b8b8b8;"></div>
<div class="a" style="left:25px;top:288px;width:969px;height:1px;background:#d4d4d4;"></div>
<div class="a" style="left:0px;top:288px;width:25px;height:1px;background:#b8b8b8;"></div>
<div class="a" style="left:25px;top:308px;width:969px;height:1px;background:#d4d4d4;"></div>
<div class="a" style="left:0px;top:308px;width:25px;height:1px;background:#b8b8b8;"></div>
<div class="a" style="left:25px;top:328px;width:969px;height:1px;background:#d4d4d4;"></div>
<div class="a" style="left:0px;top:328px;width:25px;height:1px;background:#b8b8b8;"></div>
<div class="a" style="left:25px;top:348px;width:969px;height:1px;background:#d4d4d4;"></div>
<div class="a" style="left:0px;top:348px;width:25px;height:1px;background:#b8b8b8;"></div>
<div class="a" style="left:25px;top:368px;width:969px;height:1px;background:#d4d4d4;"></div>
<div class="a" style="left:0px;top:368px;width:25px;height:1px;background:#b8b8b8;"></div>
<div class="a" style="left:25px;top:388px;width:969px;height:1px;background:#d4d4d4;"></div>
<div class="a" style="left:0px;top:388px;width:25px;height:1px;background:#b8b8b8;"></div>
<div class="a" style="left:25px;top:408px;width:969px;height:1px;background:#d4d4d4;"></div>
<div class="a" style="left:0px;top:408px;width:25px;height:1px;background:#b8b8b8;"></div>
<div class="a" style="left:25px;top:428px;width:969px;height:1px;background:#d4d4d4;"></div>
<div class="a" style="left:0px;top:428px;width:25px;height:1px;background:#b8b8b8;"></div>
<div class="a" style="left:25px;top:448px;width:969px;height:1px;background:#d4d4d4;"></div>
<div class="a" style="left:0px;top:448px;width:25px;height:1px;background:#b8b8b8;"></div>
<div class="a" style="left:25px;top:468px;width:969px;height:1px;background:#d4d4d4;"></div>
<div class="a" style="left:0px;top:468px;width:25px;height:1px;background:#b8b8b8;"></div>
<div class="a" style="left:25px;top:488px;width:969px;height:1px;background:#d4d4d4;"></div>
<div class="a" style="left:0px;top:488px;width:25px;height:1px;background:#b8b8b8;"></div>
<div class="a" style="left:25px;top:508px;width:969px;height:1px;background:#d4d4d4;"></div>
<div class="a" style="left:0px;top:508px;width:25px;height:1px;background:#b8b8b8;"></div>
<div class="a" style="left:25px;top:528px;width:969px;height:1px;background:#d4d4d4;"></div>
<div class="a" style="left:0px;top:528px;width:25px;height:1px;background:#b8b8b8;"></div>
<div class="a" style="left:25px;top:548px;width:969px;height:1px;background:#d4d4d4;"></div>
<div class="a" style="left:0px;top:548px;width:25px;height:1px;background:#b8b8b8;"></div>
<div class="a" style="left:25px;top:568px;width:969px;height:1px;background:#d4d4d4;"></div>
<div class="a" style="left:0px;top:568px;width:25px;height:1px;background:#b8b8b8;"></div>
<div class="a" style="left:25px;top:588px;width:969px;height:1px;background:#d4d4d4;"></div>
<div class="a" style="left:0px;top:588px;width:25px;height:1px;background:#b8b8b8;"></div>
<div class="a" style="left:25px;top:608px;width:969px;height:1px;background:#d4d4d4;"></div>
<div class="a" style="left:0px;top:608px;width:25px;height:1px;background:#b8b8b8;"></div>
<div class="a" style="left:25px;top:628px;width:969px;height:1px;background:#d4d4d4;"></div>
<div class="a" style="left:0px;top:628px;width:25px;height:1px;background:#b8b8b8;"></div>
<div class="a" style="left:141px;top:209px;width:1px;height:425px;background:#d4d4d4;"></div>
<div class="a" style="left:141px;top:190px;width:1px;height:18px;background:#b4b4b4;"></div>
<div class="a" style="left:256px;top:209px;width:1px;height:425px;background:#d4d4d4;"></div>
<div class="a" style="left:256px;top:190px;width:1px;height:18px;background:#b4b4b4;"></div>
<div class="a" style="left:371px;top:209px;width:1px;height:425px;background:#d4d4d4;"></div>
<div class="a" style="left:371px;top:190px;width:1px;height:18px;background:#b4b4b4;"></div>
<div class="a" style="left:516px;top:209px;width:1px;height:425px;background:#d4d4d4;"></div>
<div class="a" style="left:516px;top:190px;width:1px;height:18px;background:#b4b4b4;"></div>
<div class="a" style="left:633px;top:209px;width:1px;height:425px;background:#d4d4d4;"></div>
<div class="a" style="left:633px;top:190px;width:1px;height:18px;background:#b4b4b4;"></div>
<div class="a" style="left:744px;top:209px;width:1px;height:425px;background:#d4d4d4;"></div>
<div class="a" style="left:744px;top:190px;width:1px;height:18px;background:#b4b4b4;"></div>
<div class="a" style="left:836px;top:209px;width:1px;height:425px;background:#d4d4d4;"></div>
<div class="a" style="left:836px;top:190px;width:1px;height:18px;background:#b4b4b4;"></div>
<div class="a" style="left:928px;top:209px;width:1px;height:425px;background:#d4d4d4;"></div>
<div class="a" style="left:928px;top:190px;width:1px;height:18px;background:#b4b4b4;"></div>
<div class="a" style="left:992px;top:209px;width:1px;height:425px;background:#d4d4d4;"></div>
<div class="a" style="left:992px;top:190px;width:1px;height:18px;background:#b4b4b4;"></div>
<div class="a" style="left:25px;top:190px;width:1px;height:18px;background:#b4b4b4;"></div>
<div class="a" style="left:0px;top:208px;width:994px;height:1px;background:#9e9e9e;"></div>
<div class="a" style="left:25px;top:208px;width:1px;height:426px;background:#9e9e9e;"></div>
<div class="a" style="left:371px;top:207px;width:146px;height:2px;background:#217346;"></div>
<div class="a" style="left:994px;top:208px;width:1px;height:426px;background:#a6a6a6;"></div>
<svg class="a" style="left:10px;top:194px;" width="13" height="12" viewBox="0 0 13 12"><path d="M12 0.5 V11.5 H1 Z" fill="#b7b7b7"/></svg>
<span class="t" style="top:191px;font-size:13px;line-height:15px;height:15px;left:83.5px;transform-origin:0 50%;color:#262626;margin-left:-4.34px;">A</span>
<span class="t" style="top:191px;font-size:13px;line-height:15px;height:15px;left:199.0px;transform-origin:0 50%;color:#262626;margin-left:-4.34px;">B</span>
<span class="t" style="top:191px;font-size:13px;line-height:15px;height:15px;left:314.0px;transform-origin:0 50%;color:#262626;margin-left:-4.70px;">C</span>
<span class="t" style="top:191px;font-size:13px;line-height:15px;height:15px;left:444.0px;transform-origin:0 50%;color:#262626;margin-left:-4.70px;">D</span>
<span class="t" style="top:191px;font-size:13px;line-height:15px;height:15px;left:575.0px;transform-origin:0 50%;color:#262626;margin-left:-4.34px;">E</span>
<span class="t" style="top:191px;font-size:13px;line-height:15px;height:15px;left:689.0px;transform-origin:0 50%;color:#262626;margin-left:-3.98px;">F</span>
<span class="t" style="top:191px;font-size:13px;line-height:15px;height:15px;left:790.5px;transform-origin:0 50%;color:#262626;margin-left:-5.06px;">G</span>
<span class="t" style="top:191px;font-size:13px;line-height:15px;height:15px;left:882.5px;transform-origin:0 50%;color:#262626;margin-left:-4.70px;">H</span>
<span class="t" style="top:191px;font-size:13px;line-height:15px;height:15px;left:960.5px;transform-origin:0 50%;color:#262626;margin-left:-1.81px;">I</span>
<span class="t" style="top:212px;font-size:13px;line-height:15px;height:15px;left:13px;transform-origin:0 50%;color:#262626;transform:scaleX(0.8985);margin-left:-3.25px;">1</span>
<span class="t" style="top:232px;font-size:13px;line-height:15px;height:15px;left:13px;transform-origin:0 50%;color:#262626;transform:scaleX(0.8985);margin-left:-3.25px;">2</span>
<span class="t" style="top:252px;font-size:13px;line-height:15px;height:15px;left:13px;transform-origin:0 50%;color:#262626;transform:scaleX(0.8985);margin-left:-3.25px;">3</span>
<span class="t" style="top:272px;font-size:13px;line-height:15px;height:15px;left:13px;transform-origin:0 50%;color:#262626;transform:scaleX(0.8985);margin-left:-3.25px;">4</span>
<span class="t" style="top:292px;font-size:13px;line-height:15px;height:15px;left:13px;transform-origin:0 50%;color:#262626;transform:scaleX(0.8985);margin-left:-3.25px;">5</span>
<span class="t" style="top:312px;font-size:13px;line-height:15px;height:15px;left:13px;transform-origin:0 50%;color:#262626;transform:scaleX(0.8985);margin-left:-3.25px;">6</span>
<span class="t" style="top:332px;font-size:13px;line-height:15px;height:15px;left:13px;transform-origin:0 50%;color:#262626;transform:scaleX(0.8985);margin-left:-3.25px;">7</span>
<span class="t" style="top:352px;font-size:13px;line-height:15px;height:15px;left:13px;transform-origin:0 50%;color:#262626;transform:scaleX(0.8985);margin-left:-3.25px;">8</span>
<span class="t" style="top:372px;font-size:13px;line-height:15px;height:15px;left:13px;transform-origin:0 50%;color:#262626;transform:scaleX(0.8985);margin-left:-3.25px;">9</span>
<span class="t" style="top:392px;font-size:13px;line-height:15px;height:15px;left:13px;transform-origin:0 50%;color:#262626;transform:scaleX(0.9330);margin-left:-6.75px;">10</span>
<span class="t" style="top:412px;font-size:13px;line-height:15px;height:15px;left:13px;transform-origin:0 50%;color:#262626;transform:scaleX(1.0000);margin-left:-6.75px;">11</span>
<span class="t" style="top:432px;font-size:13px;line-height:15px;height:15px;left:13px;transform-origin:0 50%;color:#262626;transform:scaleX(0.9330);margin-left:-6.75px;">12</span>
<span class="t" style="top:452px;font-size:13px;line-height:15px;height:15px;left:13px;transform-origin:0 50%;color:#262626;transform:scaleX(0.9330);margin-left:-6.75px;">13</span>
<span class="t" style="top:472px;font-size:13px;line-height:15px;height:15px;left:13px;transform-origin:0 50%;color:#262626;transform:scaleX(0.9330);margin-left:-6.75px;">14</span>
<span class="t" style="top:492px;font-size:13px;line-height:15px;height:15px;left:13px;transform-origin:0 50%;color:#262626;transform:scaleX(0.9330);margin-left:-6.75px;">15</span>
<span class="t" style="top:512px;font-size:13px;line-height:15px;height:15px;left:13px;transform-origin:0 50%;color:#262626;transform:scaleX(0.9330);margin-left:-6.75px;">16</span>
<span class="t" style="top:532px;font-size:13px;line-height:15px;height:15px;left:13px;transform-origin:0 50%;color:#262626;transform:scaleX(0.9330);margin-left:-6.75px;">17</span>
<span class="t" style="top:552px;font-size:13px;line-height:15px;height:15px;left:13px;transform-origin:0 50%;color:#262626;transform:scaleX(0.9330);margin-left:-6.75px;">18</span>
<span class="t" style="top:572px;font-size:13px;line-height:15px;height:15px;left:13px;transform-origin:0 50%;color:#262626;transform:scaleX(0.9330);margin-left:-6.75px;">19</span>
<span class="t" style="top:592px;font-size:13px;line-height:15px;height:15px;left:13px;transform-origin:0 50%;color:#262626;transform:scaleX(0.9330);margin-left:-6.75px;">20</span>
<span class="t" style="top:612px;font-size:13px;line-height:15px;height:15px;left:13px;transform-origin:0 50%;color:#262626;transform:scaleX(0.9330);margin-left:-6.75px;">21</span>
<div class="a" style="left:26px;top:248px;width:811px;height:21px;background:#d9e1f2;"></div>
<div class="a" style="left:26px;top:268px;width:811px;height:1px;background:#8ea9db;"></div>
<div class="a" style="left:26px;top:269px;width:810px;height:39px;background:#fff;"></div>
<div class="a" style="left:26px;top:308px;width:811px;height:21px;background:#d9e1f2;"></div>
<div class="a" style="left:26px;top:308px;width:811px;height:1px;background:#8ea9db;"></div>
<div class="a" style="left:836px;top:289px;width:1px;height:19px;background:#fff;"></div>
<div class="a" style="left:26px;top:348px;width:608px;height:21px;background:#d9e1f2;"></div>
<div class="a" style="left:26px;top:368px;width:608px;height:1px;background:#8ea9db;"></div>
<div class="a" style="left:26px;top:369px;width:607px;height:19px;background:#fff;"></div>
<div class="a" style="left:26px;top:408px;width:231px;height:21px;background:#d9e1f2;"></div>
<div class="a" style="left:26px;top:428px;width:231px;height:1px;background:#8ea9db;"></div>
<div class="a" style="left:26px;top:429px;width:230px;height:79px;background:#fff;"></div>
<div class="a" style="left:26px;top:508px;width:231px;height:21px;background:#d9e1f2;"></div>
<div class="a" style="left:26px;top:508px;width:231px;height:1px;background:#8ea9db;"></div>
<div class="a" style="left:26px;top:568px;width:231px;height:21px;background:#d9e1f2;"></div>
<div class="a" style="left:26px;top:588px;width:231px;height:1px;background:#8ea9db;"></div>
<div class="a" style="left:26px;top:608px;width:608px;height:21px;background:#d9e1f2;"></div>
<div class="a" style="left:26px;top:628px;width:608px;height:1px;background:#8ea9db;"></div>
<div class="a" style="left:25px;top:208px;width:1px;height:426px;background:#9e9e9e;"></div>
<span class="t" style="top:252px;font-size:13.4px;line-height:15px;height:15px;left:28px;transform-origin:0 50%;color:#000;font-weight:bold;transform:scaleX(0.9271);">Row Labels</span>
<div class="a" style="left:124px;top:250px;width:17px;height:17px;background:#fcfcfc;border:1px solid #a6a6a6;border-radius:1px;"></div>
<svg class="a" style="left:129px;top:257px;" width="7" height="4" viewBox="0 0 7 4"><path d="M0 0 H7 L3.5 4 Z" fill="#666"/></svg>
<span class="t" style="top:252px;font-size:13.4px;line-height:15px;height:15px;left:144px;transform-origin:0 50%;color:#000;font-weight:bold;transform:scaleX(0.9427);">Sum of Total Sales</span>
<span class="t" style="top:252px;font-size:13.4px;line-height:15px;height:15px;left:259px;transform-origin:0 50%;color:#000;font-weight:bold;transform:scaleX(0.9421);">Sum of Total Cost</span>
<span class="t" style="top:252px;font-size:13.4px;line-height:15px;height:15px;left:374px;transform-origin:0 50%;color:#000;font-weight:bold;transform:scaleX(1.0011);">Total profit</span>
<div class="a" style="left:517px;top:249px;width:116px;height:19px;overflow:hidden;">
<span class="t" style="top:3px;font-size:13.4px;line-height:15px;height:15px;left:2px;transform-origin:0 50%;color:#000;font-weight:bold;transform:scaleX(0.9498);">Average of Total Sales</span>
</div>
<span class="t" style="top:252px;font-size:13.4px;line-height:15px;height:15px;left:636px;transform-origin:0 50%;color:#000;font-weight:bold;transform:scaleX(0.9453);">Sum of Units Sold</span>
<span class="t" style="top:252px;font-size:13.4px;line-height:15px;height:15px;left:747px;transform-origin:0 50%;color:#000;font-weight:bold;transform:scaleX(0.9750);">Count of Gender</span>
<span class="t" style="top:272px;font-size:13.4px;line-height:15px;height:15px;left:28px;transform-origin:0 50%;color:#000;transform:scaleX(1.0189);">Female</span>
<span class="t" style="top:292px;font-size:13.4px;line-height:15px;height:15px;left:28px;transform-origin:0 50%;color:#000;transform:scaleX(1.0334);">Male</span>
<span class="t" style="top:312px;font-size:13.4px;line-height:15px;height:15px;left:28px;transform-origin:0 50%;color:#000;font-weight:bold;transform:scaleX(0.9642);">Grand Total</span>
<span class="t" style="top:272px;font-size:13.4px;line-height:15px;height:15px;right:1112px;transform-origin:100% 50%;color:#000;transform:scaleX(0.9552);">1,543,236,173</span>
<span class="t" style="top:272px;font-size:13.4px;line-height:15px;height:15px;right:997px;transform-origin:100% 50%;color:#000;transform:scaleX(0.9548);">887,534,753</span>
<span class="t" style="top:272px;font-size:13.4px;line-height:15px;height:15px;right:852px;transform-origin:100% 50%;color:#000;transform:scaleX(0.9548);">655,701,420</span>
<span class="t" style="top:272px;font-size:13.4px;line-height:15px;height:15px;right:735px;transform-origin:100% 50%;color:#000;transform:scaleX(0.9544);">522,776</span>
<span class="t" style="top:272px;font-size:13.4px;line-height:15px;height:15px;right:624px;transform-origin:100% 50%;color:#000;transform:scaleX(0.9544);">161,280</span>
<span class="t" style="top:272px;font-size:13.4px;line-height:15px;height:15px;right:532px;transform-origin:100% 50%;color:#000;transform:scaleX(0.9548);">2,952</span>
<span class="t" style="top:292px;font-size:13.4px;line-height:15px;height:15px;right:1112px;transform-origin:100% 50%;color:#000;transform:scaleX(0.9552);">1,498,301,391</span>
<span class="t" style="top:292px;font-size:13.4px;line-height:15px;height:15px;right:997px;transform-origin:100% 50%;color:#000;transform:scaleX(0.9548);">868,572,595</span>
<span class="t" style="top:292px;font-size:13.4px;line-height:15px;height:15px;right:852px;transform-origin:100% 50%;color:#000;transform:scaleX(0.9548);">629,728,796</span>
<span class="t" style="top:292px;font-size:13.4px;line-height:15px;height:15px;right:735px;transform-origin:100% 50%;color:#000;transform:scaleX(0.9544);">518,085</span>
<span class="t" style="top:292px;font-size:13.4px;line-height:15px;height:15px;right:624px;transform-origin:100% 50%;color:#000;transform:scaleX(0.9544);">158,074</span>
<span class="t" style="top:292px;font-size:13.4px;line-height:15px;height:15px;right:532px;transform-origin:100% 50%;color:#000;transform:scaleX(0.9548);">2,892</span>
<span class="t" style="top:312px;font-size:13.4px;line-height:15px;height:15px;right:1112px;transform-origin:100% 50%;color:#000;font-weight:bold;transform:scaleX(0.9552);">3,041,537,564</span>
<span class="t" style="top:312px;font-size:13.4px;line-height:15px;height:15px;right:997px;transform-origin:100% 50%;color:#000;font-weight:bold;transform:scaleX(0.9552);">1,756,107,348</span>
<span class="t" style="top:312px;font-size:13.4px;line-height:15px;height:15px;right:852px;transform-origin:100% 50%;color:#000;font-weight:bold;transform:scaleX(0.9552);">1,285,430,216</span>
<span class="t" style="top:312px;font-size:13.4px;line-height:15px;height:15px;right:735px;transform-origin:100% 50%;color:#000;font-weight:bold;transform:scaleX(0.9544);">520,455</span>
<span class="t" style="top:312px;font-size:13.4px;line-height:15px;height:15px;right:624px;transform-origin:100% 50%;color:#000;font-weight:bold;transform:scaleX(0.9544);">319,354</span>
<span class="t" style="top:312px;font-size:13.4px;line-height:15px;height:15px;right:532px;transform-origin:100% 50%;color:#000;font-weight:bold;transform:scaleX(0.9548);">5,844</span>
<span class="t" style="top:352px;font-size:13.4px;line-height:15px;height:15px;left:28px;transform-origin:0 50%;color:#000;font-weight:bold;transform:scaleX(0.9427);">Sum of Total Sales</span>
<span class="t" style="top:352px;font-size:13.4px;line-height:15px;height:15px;left:144px;transform-origin:0 50%;color:#000;font-weight:bold;transform:scaleX(0.9421);">Sum of Total Cost</span>
<span class="t" style="top:352px;font-size:13.4px;line-height:15px;height:15px;left:259px;transform-origin:0 50%;color:#000;font-weight:bold;transform:scaleX(1.0011);">Total profit</span>
<span class="t" style="top:352px;font-size:13.4px;line-height:15px;height:15px;left:374px;transform-origin:0 50%;color:#000;font-weight:bold;transform:scaleX(0.9568);">Average of Total Sales</span>
<span class="t" style="top:352px;font-size:13.4px;line-height:15px;height:15px;left:519px;transform-origin:0 50%;color:#000;font-weight:bold;transform:scaleX(0.9453);">Sum of Units Sold</span>
<span class="t" style="top:372px;font-size:13.4px;line-height:15px;height:15px;right:1227px;transform-origin:100% 50%;color:#000;transform:scaleX(0.9548);">745,989,706</span>
<span class="t" style="top:372px;font-size:13.4px;line-height:15px;height:15px;right:1112px;transform-origin:100% 50%;color:#000;transform:scaleX(0.9548);">425,760,220</span>
<span class="t" style="top:372px;font-size:13.4px;line-height:15px;height:15px;right:997px;transform-origin:100% 50%;color:#000;transform:scaleX(0.9548);">320,229,486</span>
<span class="t" style="top:372px;font-size:13.4px;line-height:15px;height:15px;right:852px;transform-origin:100% 50%;color:#000;transform:scaleX(0.9544);">509,556</span>
<span class="t" style="top:372px;font-size:13.4px;line-height:15px;height:15px;right:735px;transform-origin:100% 50%;color:#000;transform:scaleX(0.9544);">78,646</span>
<span class="t" style="top:412px;font-size:13.4px;line-height:15px;height:15px;left:28px;transform-origin:0 50%;color:#000;font-weight:bold;transform:scaleX(0.9271);">Row Labels</span>
<div class="a" style="left:124px;top:410px;width:17px;height:17px;background:#fcfcfc;border:1px solid #a6a6a6;border-radius:1px;"></div>
<svg class="a" style="left:129px;top:417px;" width="7" height="4" viewBox="0 0 7 4"><path d="M0 0 H7 L3.5 4 Z" fill="#666"/></svg>
<span class="t" style="top:412px;font-size:13.4px;line-height:15px;height:15px;left:144px;transform-origin:0 50%;color:#000;font-weight:bold;transform:scaleX(0.9384);">Sum of Tota Sales</span>
<span class="t" style="top:432px;font-size:13.4px;line-height:15px;height:15px;left:28px;transform-origin:0 50%;color:#000;transform:scaleX(0.9231);">Q1</span>
<span class="t" style="top:432px;font-size:13.4px;line-height:15px;height:15px;right:1112px;transform-origin:100% 50%;color:#000;transform:scaleX(0.9791);">187M</span>
<span class="t" style="top:452px;font-size:13.4px;line-height:15px;height:15px;left:28px;transform-origin:0 50%;color:#000;transform:scaleX(0.9231);">Q2</span>
<span class="t" style="top:452px;font-size:13.4px;line-height:15px;height:15px;right:1112px;transform-origin:100% 50%;color:#000;transform:scaleX(0.9791);">187M</span>
<span class="t" style="top:472px;font-size:13.4px;line-height:15px;height:15px;left:28px;transform-origin:0 50%;color:#000;transform:scaleX(0.9231);">Q3</span>
<span class="t" style="top:472px;font-size:13.4px;line-height:15px;height:15px;right:1112px;transform-origin:100% 50%;color:#000;transform:scaleX(0.9791);">188M</span>
<span class="t" style="top:492px;font-size:13.4px;line-height:15px;height:15px;left:28px;transform-origin:0 50%;color:#000;transform:scaleX(0.9231);">Q4</span>
<span class="t" style="top:492px;font-size:13.4px;line-height:15px;height:15px;right:1112px;transform-origin:100% 50%;color:#000;transform:scaleX(0.9791);">184M</span>
<span class="t" style="top:512px;font-size:13.4px;line-height:15px;height:15px;left:28px;transform-origin:0 50%;color:#000;font-weight:bold;transform:scaleX(0.9642);">Grand Total</span>
<span class="t" style="top:512px;font-size:13.4px;line-height:15px;height:15px;right:1112px;transform-origin:100% 50%;color:#000;font-weight:bold;transform:scaleX(0.9324);">745989706</span>
<span class="t" style="top:572px;font-size:13.4px;line-height:15px;height:15px;left:28px;transform-origin:0 50%;color:#000;transform:scaleX(1.0461);">Quarter</span>
<span class="t" style="top:572px;font-size:13.4px;line-height:15px;height:15px;left:144px;transform-origin:0 50%;color:#000;transform:scaleX(0.9231);">Q1</span>
<div class="a" style="left:239px;top:570px;width:17px;height:17px;background:#fcfcfc;border:1px solid #a6a6a6;border-radius:1px;"></div>
<svg class="a" style="left:242px;top:574px;" width="12" height="9" viewBox="0 0 12 9"><path d="M3 0 H12 L9.2 3 V8 H6.2 V3 Z" fill="#555"/><path d="M0 6 H5 L2.5 8.8 Z" fill="#555"/></svg>
<span class="t" style="top:612px;font-size:13.4px;line-height:15px;height:15px;left:28px;transform-origin:0 50%;color:#000;font-weight:bold;transform:scaleX(0.9384);">Sum of Tota Sales</span>
<span class="t" style="top:612px;font-size:13.4px;line-height:15px;height:15px;left:144px;transform-origin:0 50%;color:#000;font-weight:bold;transform:scaleX(0.9421);">Sum of Total Cost</span>
<span class="t" style="top:612px;font-size:13.4px;line-height:15px;height:15px;left:259px;transform-origin:0 50%;color:#000;font-weight:bold;transform:scaleX(1.0011);">Total profit</span>
<span class="t" style="top:612px;font-size:13.4px;line-height:15px;height:15px;left:374px;transform-origin:0 50%;color:#000;font-weight:bold;transform:scaleX(0.9568);">Average of Total Sales</span>
<span class="t" style="top:612px;font-size:13.4px;line-height:15px;height:15px;left:519px;transform-origin:0 50%;color:#000;font-weight:bold;transform:scaleX(0.9453);">Sum of Units Sold</span>
<div class="a" style="left:998px;top:191px;width:15px;height:445px;background:#f0f0f0;"></div>
<div class="a" style="left:998px;top:191px;width:15px;height:15px;background:#fff;border:1px solid #999;"></div>
<svg class="a" style="left:1002px;top:196px;" width="7" height="4" viewBox="0 0 7 4"><path d="M0 4 L3.5 0 L7 4 Z" fill="#111"/></svg>
<div class="a" style="left:998px;top:206px;width:15px;height:17px;background:#fff;border:1px solid #999;"></div>
<div class="a" style="left:998px;top:620px;width:15px;height:15px;background:#fff;border:1px solid #999;"></div>
<svg class="a" style="left:1002px;top:626px;" width="7" height="4" viewBox="0 0 7 4"><path d="M0 0 H7 L3.5 4 Z" fill="#111"/></svg>
<div class="a" style="left:1016px;top:191px;width:1px;height:469px;background:#c0c0c0;"></div>
<span class="t" style="top:204px;font-size:20.5px;line-height:23px;height:23px;left:1030.5px;transform-origin:0 50%;color:#505050;transform:scaleX(0.9873);">PivotTable Fields</span>
<svg class="a" style="left:1294px;top:209px;" width="14" height="8" viewBox="0 0 14 8"><path d="M0.5 0.5 L7 7 L13.5 0.5" fill="none" stroke="#444" stroke-width="1.1"/></svg>
<svg class="a" style="left:1337px;top:207px;" width="11" height="11" viewBox="0 0 11 11"><path d="M0.5 0.5 L10.5 10.5 M10.5 0.5 L0.5 10.5" stroke="#444" stroke-width="1.1"/></svg>
<span class="t" style="top:237px;font-size:12px;line-height:14px;height:14px;left:1030.5px;transform-origin:0 50%;color:#262626;transform:scaleX(0.9760);">Choose fields to</span>
<span class="t" style="top:252px;font-size:12px;line-height:14px;height:14px;left:1030.5px;transform-origin:0 50%;color:#262626;transform:scaleX(0.9945);">add to report:</span>
<div class="a" style="left:1139px;top:236px;width:46px;height:29px;background:#fff;border:1px solid #ababab;"></div>
<svg class="a" style="left:1149.5px;top:242.5px;" width="14" height="14" viewBox="0 0 14 14"><g transform="translate(7 7)"><rect x="-1.3" y="-6.6" width="2.6" height="13.2" fill="#8c8c8c" transform="rotate(0)"/><rect x="-1.3" y="-6.6" width="2.6" height="13.2" fill="#8c8c8c" transform="rotate(45)"/><rect x="-1.3" y="-6.6" width="2.6" height="13.2" fill="#8c8c8c" transform="rotate(90)"/><rect x="-1.3" y="-6.6" width="2.6" height="13.2" fill="#8c8c8c" transform="rotate(135)"/><circle r="4.6" fill="#8c8c8c"/><circle r="2" fill="#fff"/></g></svg>
<svg class="a" style="left:1171px;top:247px;" width="9" height="5" viewBox="0 0 9 5"><path d="M0 0 H9 L4.5 4.5 Z" fill="#333"/></svg>
<div class="a" style="left:1193px;top:232px;width:1px;height:420px;border-left:1px dotted #b0b0b0;"></div>
<span class="t" style="top:232px;font-size:12px;line-height:14px;height:14px;left:1200.5px;transform-origin:0 50%;color:#262626;transform:scaleX(0.9539);">Drag fields between areas</span>
<span class="t" style="top:247px;font-size:12px;line-height:14px;height:14px;left:1200.5px;transform-origin:0 50%;color:#262626;transform:scaleX(0.9802);">below:</span>
<div class="a" style="left:1029px;top:279px;width:156px;height:24px;background:#fff;border:1px solid #c6c6c6;"></div>
<span class="t" style="top:283px;font-size:12px;line-height:14px;height:14px;left:1036.5px;transform-origin:0 50%;color:#767676;transform:scaleX(0.9071);">Search</span>
<svg class="a" style="left:1166px;top:283px;" width="15" height="15" viewBox="0 0 15 15"><circle cx="9.3" cy="5.7" r="4.7" fill="none" stroke="#444" stroke-width="1.1"/><path d="M6 9 L0.8 14.2" stroke="#444" stroke-width="1.3"/></svg>
<div class="a" style="left:1029px;top:319px;width:156px;height:322px;background:#fff;border:1px solid #8a8a8a;"></div>
<div class="a" style="left:1034px;top:323px;width:13px;height:13px;background:#fff;border:1px solid #6e6e6e;"></div>
<span class="t" style="top:324px;font-size:12px;line-height:14px;height:14px;left:1053px;transform-origin:0 50%;color:#262626;transform:scaleX(0.9661);">Date</span>
<div class="a" style="left:1034px;top:344px;width:13px;height:13px;background:#fff;border:1px solid #6e6e6e;"></div>
<span class="t" style="top:345px;font-size:12px;line-height:14px;height:14px;left:1053px;transform-origin:0 50%;color:#262626;transform:scaleX(1.0349);">Country</span>
<div class="a" style="left:1034px;top:365px;width:13px;height:13px;background:#fff;border:1px solid #6e6e6e;"></div>
<span class="t" style="top:366px;font-size:12px;line-height:14px;height:14px;left:1053px;transform-origin:0 50%;color:#262626;transform:scaleX(1.0159);">City</span>
<div class="a" style="left:1034px;top:386px;width:13px;height:13px;background:#fff;border:1px solid #6e6e6e;"></div>
<span class="t" style="top:387px;font-size:12px;line-height:14px;height:14px;left:1053px;transform-origin:0 50%;color:#262626;transform:scaleX(1.0276);">Product</span>
<div class="a" style="left:1034px;top:407px;width:13px;height:13px;background:#fff;border:1px solid #6e6e6e;"></div>
<span class="t" style="top:408px;font-size:12px;line-height:14px;height:14px;left:1053px;transform-origin:0 50%;color:#262626;transform:scaleX(0.9691);">Year</span>
<div class="a" style="left:1034px;top:428px;width:13px;height:13px;background:#fff;border:1px solid #6e6e6e;"></div>
<span class="t" style="top:429px;font-size:12px;line-height:14px;height:14px;left:1053px;transform-origin:0 50%;color:#262626;transform:scaleX(0.9954);">Quarter</span>
<div class="a" style="left:1034px;top:449px;width:13px;height:13px;background:#fff;border:1px solid #6e6e6e;"></div>
<span class="t" style="top:450px;font-size:12px;line-height:14px;height:14px;left:1053px;transform-origin:0 50%;color:#262626;transform:scaleX(1.0642);">Month</span>
<div class="a" style="left:1034px;top:470px;width:13px;height:13px;background:#fff;border:1px solid #6e6e6e;"></div>
<span class="t" style="top:471px;font-size:12px;line-height:14px;height:14px;left:1053px;transform-origin:0 50%;color:#262626;transform:scaleX(0.9601);">Transaction ID</span>
<div class="a" style="left:1034px;top:491px;width:13px;height:13px;background:#fff;border:1px solid #6e6e6e;"></div>
<span class="t" style="top:492px;font-size:12px;line-height:14px;height:14px;left:1053px;transform-origin:0 50%;color:#262626;transform:scaleX(0.9617);">Gender</span>
<div class="a" style="left:1034px;top:512px;width:13px;height:13px;background:#fff;border:1px solid #6e6e6e;"></div>
<span class="t" style="top:513px;font-size:12px;line-height:14px;height:14px;left:1053px;transform-origin:0 50%;color:#262626;transform:scaleX(0.9689);">Units Sold</span>
<div class="a" style="left:1034px;top:533px;width:13px;height:13px;background:#217346;"></div>
<svg class="a" style="left:1036px;top:535px;" width="9" height="8" viewBox="0 0 9 8"><path d="M0.8 4 L3.4 6.6 L8.2 1" fill="none" stroke="#fff" stroke-width="1.5"/></svg>
<span class="t" style="top:534px;font-size:12px;line-height:14px;height:14px;left:1053px;transform-origin:0 50%;color:#262626;font-weight:bold;transform:scaleX(0.9563);">Unit Cost</span>
<div class="a" style="left:1034px;top:554px;width:13px;height:13px;background:#fff;border:1px solid #6e6e6e;"></div>
<span class="t" style="top:555px;font-size:12px;line-height:14px;height:14px;left:1053px;transform-origin:0 50%;color:#262626;transform:scaleX(0.9795);">Unit Selling Price</span>
<div class="a" style="left:1034px;top:575px;width:13px;height:13px;background:#fff;border:1px solid #6e6e6e;"></div>
<span class="t" style="top:576px;font-size:12px;line-height:14px;height:14px;left:1053px;transform-origin:0 50%;color:#262626;transform:scaleX(0.9933);">Total Cost</span>
<div class="a" style="left:1034px;top:596px;width:13px;height:13px;background:#fff;border:1px solid #6e6e6e;"></div>
<span class="t" style="top:597px;font-size:12px;line-height:14px;height:14px;left:1053px;transform-origin:0 50%;color:#262626;transform:scaleX(0.9278);">Tota Sales</span>
<div class="a" style="left:1034px;top:617px;width:13px;height:13px;background:#fff;border:1px solid #6e6e6e;"></div>
<span class="t" style="top:618px;font-size:12px;line-height:14px;height:14px;left:1053px;transform-origin:0 50%;color:#262626;transform:scaleX(0.9331);">Field1</span>
<div class="a" style="left:1034px;top:638px;width:13px;height:2px;background:#217346;"></div>
<div class="a" style="left:1168px;top:320px;width:16px;height:320px;background:#f0f0f0;"></div>
<div class="a" style="left:1168px;top:322px;width:15px;height:15px;background:#fff;border:1px solid #8a8a8a;"></div>
<svg class="a" style="left:1171.5px;top:327px;" width="8" height="5" viewBox="0 0 8 5"><path d="M0 4.5 L4 0 L8 4.5 Z" fill="#222"/></svg>
<div class="a" style="left:1168px;top:336px;width:15px;height:229px;background:#fff;border:1px solid #8a8a8a;"></div>
<div class="a" style="left:1168px;top:623px;width:15px;height:15px;background:#fff;border:1px solid #8a8a8a;"></div>
<svg class="a" style="left:1171.5px;top:628px;" width="8" height="5" viewBox="0 0 8 5"><path d="M0 0 H8 L4 4.5 Z" fill="#222"/></svg>
<span class="t" style="top:286px;font-size:12px;line-height:14px;height:14px;left:1222.5px;transform-origin:0 50%;color:#262626;transform:scaleX(0.9335);">Filters</span>
<div class="a" style="left:1199px;top:304px;width:153px;height:48px;background:#fff;"></div>
<svg class="a" style="left:1203px;top:286px;" width="12" height="11" viewBox="0 0 12 11"><path d="M0 0 H11 L6.8 4.8 V10.5 L4.2 8.5 V4.8 Z" fill="#8a8a8a"/></svg>
<div class="a" style="left:1199px;top:358px;width:153px;height:1px;background:#c6c6c6;"></div>
<span class="t" style="top:370px;font-size:12px;line-height:14px;height:14px;left:1222.5px;transform-origin:0 50%;color:#262626;transform:scaleX(1.0030);">Columns</span>
<div class="a" style="left:1199px;top:388px;width:153px;height:47px;background:#fff;"></div>
<svg class="a" style="left:1204px;top:371px;" width="10" height="10" viewBox="0 0 10 10"><path d="M0.5 0 V10 M3.5 0 V10 M6.5 0 V10 M9.5 0 V10" stroke="#8a8a8a" stroke-width="1"/><rect x="0" y="0" width="2" height="10" fill="#8a8a8a"/></svg>
<div class="a" style="left:1199px;top:441px;width:153px;height:1px;background:#c6c6c6;"></div>
<span class="t" style="top:453px;font-size:12px;line-height:14px;height:14px;left:1222.5px;transform-origin:0 50%;color:#262626;transform:scaleX(0.9162);">Rows</span>
<div class="a" style="left:1199px;top:470px;width:153px;height:48px;background:#fff;"></div>
<svg class="a" style="left:1204px;top:455px;" width="10" height="9" viewBox="0 0 10 9"><path d="M0 0.5 H10 M0 3.5 H10 M0 6.5 H10" stroke="#8a8a8a" stroke-width="1"/><rect x="0" y="0" width="10" height="2" fill="#8a8a8a"/></svg>
<div class="a" style="left:1200px;top:473px;width:151px;height:19px;background:#fff;border:1px solid #ababab;"></div>
<span class="t" style="top:476px;font-size:12px;line-height:14px;height:14px;left:1207.5px;transform-origin:0 50%;color:#262626;transform:scaleX(0.9864);">Months (Date)</span>
<svg class="a" style="left:1333px;top:480px;" width="9" height="5" viewBox="0 0 9 5"><path d="M0 0 H9 L4.5 4.5 Z" fill="#222"/></svg>
<div class="a" style="left:1199px;top:524px;width:153px;height:1px;background:#c6c6c6;"></div>
<span class="t" style="top:536px;font-size:12px;line-height:14px;height:14px;left:1222.5px;transform-origin:0 50%;color:#262626;transform:scaleX(0.9354);">Values</span>
<div class="a" style="left:1199px;top:554px;width:153px;height:48px;background:#fff;"></div>
<span class="t" style="top:535px;font-size:13px;line-height:15px;height:15px;left:1203.5px;transform-origin:0 50%;color:#8a8a8a;font-family:'Liberation Serif',serif;transform:scaleX(1.3196);">Σ</span>
<div class="a" style="left:1200px;top:556px;width:151px;height:19px;background:#fff;border:1px solid #ababab;"></div>
<span class="t" style="top:559px;font-size:12px;line-height:14px;height:14px;left:1207.5px;transform-origin:0 50%;color:#262626;transform:scaleX(0.9867);">Sum of Unit Cost</span>
<svg class="a" style="left:1333px;top:563px;" width="9" height="5" viewBox="0 0 9 5"><path d="M0 0 H9 L4.5 4.5 Z" fill="#222"/></svg>
<div class="a" style="left:1202px;top:633px;width:13px;height:13px;background:#fff;border:1px solid #6e6e6e;"></div>
<span class="t" style="top:633px;font-size:12px;line-height:14px;height:14px;left:1222.5px;transform-origin:0 50%;color:#262626;transform:scaleX(0.9315);">Defer Layo...</span>
<div class="a" style="left:1302px;top:627px;width:50px;height:25px;background:#fff;border:1px solid #d0d0d0;"></div>
<span class="t" style="top:633px;font-size:12px;line-height:14px;height:14px;left:1309px;transform-origin:0 50%;color:#b4b4b4;transform:scaleX(0.9560);">Update</span>
<div class="a" style="left:0px;top:634px;width:996px;height:28px;background:#e6e6e6;"></div>
<div class="a" style="left:0px;top:634px;width:995px;height:1px;background:#999;"></div>
<div class="a" style="left:100px;top:634px;width:97px;height:25px;background:#fff;"></div>
<div class="a" style="left:100px;top:657px;width:97px;height:2px;background:#217346;"></div>
<div class="a" style="left:100px;top:634px;width:1px;height:23px;background:#ababab;"></div>
<div class="a" style="left:196px;top:634px;width:1px;height:23px;background:#ababab;"></div>
<span class="t" style="top:640px;font-size:13px;line-height:15px;height:15px;left:112.5px;transform-origin:0 50%;color:#217346;font-weight:bold;transform:scaleX(1.0132);">Data model</span>
<span class="t" style="top:640px;font-size:13px;line-height:15px;height:15px;left:211px;transform-origin:0 50%;color:#444;transform:scaleX(0.9578);">Essam Elsayad I Data</span>
<span class="t" style="top:640px;font-size:13px;line-height:15px;height:15px;left:363.5px;transform-origin:0 50%;color:#444;transform:scaleX(0.9708);">Final DashBoard</span>
<div class="a" style="left:349px;top:638px;width:1px;height:20px;background:#ababab;"></div>
<div class="a" style="left:473px;top:638px;width:1px;height:20px;background:#ababab;"></div>
<svg class="a" style="left:27px;top:643px;" width="5" height="9" viewBox="0 0 5 9"><path d="M4.5 0.5 V8.5 L0 4.5 Z" fill="#1e6b41"/></svg>
<svg class="a" style="left:56px;top:643px;" width="5" height="9" viewBox="0 0 5 9"><path d="M0 0.5 V8.5 L4.5 4.5 Z" fill="#c0c0c0"/></svg>
<span class="t" style="top:640px;font-size:13px;line-height:15px;height:15px;left:81px;transform-origin:0 50%;color:#217346;font-weight:bold;transform:scaleX(0.9683);">...</span>
<svg class="a" style="left:506px;top:639.5px;" width="17" height="17" viewBox="0 0 17 17"><circle cx="8.5" cy="8.5" r="7.4" fill="none" stroke="#6a6a6a" stroke-width="1.3"/><path d="M8.5 4.5 V12.5 M4.5 8.5 H12.5" stroke="#6a6a6a" stroke-width="1.5"/></svg>
<div class="a" style="left:609px;top:643px;width:2px;height:2px;background:#a0a0a0;"></div>
<div class="a" style="left:609px;top:647px;width:2px;height:2px;background:#a0a0a0;"></div>
<div class="a" style="left:609px;top:651px;width:2px;height:2px;background:#a0a0a0;"></div>
<div class="a" style="left:640px;top:642px;width:340px;height:14px;background:#f0f0f0;"></div>
<div class="a" style="left:626px;top:641px;width:15px;height:15px;background:#fff;border:1px solid #999;"></div>
<svg class="a" style="left:631px;top:645px;" width="4" height="7" viewBox="0 0 4 7"><path d="M4 0 V7 L0 3.5 Z" fill="#111"/></svg>
<div class="a" style="left:640px;top:641px;width:278px;height:15px;background:#fff;border:1px solid #999;"></div>
<div class="a" style="left:980px;top:641px;width:15px;height:15px;background:#fff;border:1px solid #999;"></div>
<svg class="a" style="left:986px;top:645px;" width="4" height="7" viewBox="0 0 4 7"><path d="M0 0 V7 L4 3.5 Z" fill="#111"/></svg>
<div class="a" style="left:0px;top:662px;width:1366px;height:22px;background:#f3f3f3;"></div>
<div class="a" style="left:0px;top:662px;width:1366px;height:1px;background:#d4d4d4;"></div>
<span class="t" style="top:668px;font-size:11.5px;line-height:12px;height:12px;left:11px;transform-origin:0 50%;color:#333;transform:scaleX(0.9323);">Ready</span>
<span class="t" style="top:668px;font-size:11.5px;line-height:12px;height:12px;left:58.5px;transform-origin:0 50%;color:#333;transform:scaleX(0.9545);">Circular References</span>
<svg class="a" style="left:176px;top:666px;" width="13" height="13" viewBox="0 0 13 13"><circle cx="3" cy="3" r="2.6" fill="#555"/><path d="M7 0.5 H12.5 V12.5 H0.5 V7" fill="none" stroke="#555"/><path d="M3 8.5h1.5M6 8.5h1.5M9 8.5h1.5M3 10.5h1.5M6 10.5h1.5M9 10.5h1.5M6 6.5h1.5M9 6.5h1.5" stroke="#555" stroke-width="1.2"/><path d="M7 3.5 H12.5" stroke="#555" stroke-width="1.6"/></svg>
<svg class="a" style="left:207px;top:665px;" width="16" height="15" viewBox="0 0 16 15"><path d="M8.5 2.2 A5.6 5.6 0 1 0 10.5 11.2" fill="none" stroke="#444" stroke-width="1.2"/><path d="M7 0.5 V5.5 M4.5 4 H9.5 M5 9.5 L7 5.5" stroke="#444" stroke-width="1.1" fill="none"/><path d="M8.5 8 L14.5 14 M14.5 8 L8.5 14" stroke="#444" stroke-width="1.6"/></svg>
<span class="t" style="top:667px;font-size:11.5px;line-height:12px;height:12px;left:226.5px;transform-origin:0 50%;color:#333;font-weight:bold;transform:scaleX(0.9132);">Accessibility: Investigate</span>
<div class="a" style="left:1066px;top:663px;width:40px;height:21px;background:#c8c8c8;"></div>
<svg class="a" style="left:1079px;top:666px;" width="13" height="13" viewBox="0 0 13 13"><path d="M0.5 0.5 H12.5 V12.5 H0.5 Z M0.5 4.5 H12.5 M0.5 8.5 H12.5 M4.5 0.5 V12.5 M8.5 0.5 V12.5" fill="none" stroke="#6a6a66"/></svg>
<svg class="a" style="left:1119px;top:666px;" width="14" height="13" viewBox="0 0 14 13"><rect x="0.5" y="0.5" width="12" height="12" fill="none" stroke="#6a6a66"/><rect x="3.5" y="3.5" width="6" height="6" fill="none" stroke="#6a6a66"/><path d="M5 5.5h3M5 7.5h3" stroke="#6a6a66"/></svg>
<svg class="a" style="left:1160px;top:666px;" width="13" height="13" viewBox="0 0 13 13"><path d="M0.5 0.5 H12.5 V12.5 H0.5 Z M0.5 7.5 H4.5 V0.5 M8.5 0.5 V7.5 H12.5" fill="none" stroke="#6a6a66"/></svg>
<div class="a" style="left:1192px;top:673px;width:8px;height:1px;background:#444;"></div>
<div class="a" style="left:1205px;top:673px;width:100px;height:1px;background:#777;"></div>
<div class="a" style="left:1253px;top:667px;width:5px;height:12px;background:#444;"></div>
<div class="a" style="left:1310px;top:673px;width:9px;height:1px;background:#444;"></div>
<div class="a" style="left:1314px;top:669px;width:1px;height:9px;background:#444;"></div>
<span class="t" style="top:668px;font-size:11.5px;line-height:12px;height:12px;left:1331.5px;transform-origin:0 50%;color:#333;transform:scaleX(0.8837);">100%</span>
<div class="a" style="left:0px;top:684px;width:1366px;height:4px;background:#2a2620;"></div>
<div class="a" style="left:48px;top:684px;width:288px;height:4px;background:#f0f0f0;"></div>
<div class="a" style="left:0px;top:684px;width:48px;height:4px;background:#1a1616;"></div>
<div class="a" style="left:596px;top:588px;width:172px;height:84px;opacity:0.085;color:#000;pointer-events:none;">
<span class="t" style="top:0px;font-size:60px;line-height:67px;height:67px;left:4px;transform-origin:0 50%;color:#000;font-weight:bold;font-family:'DejaVu Sans',sans-serif;direction:rtl;-webkit-text-stroke:1.4px #000;transform:scaleX(0.7565);">مستقل</span>
<span class="t" style="top:55px;font-size:28px;line-height:31px;height:31px;left:5px;transform-origin:0 50%;color:#000;font-weight:bold;transform:scaleX(0.9438);">mostaql.com</span>
</div>
</div>
</body></html>
